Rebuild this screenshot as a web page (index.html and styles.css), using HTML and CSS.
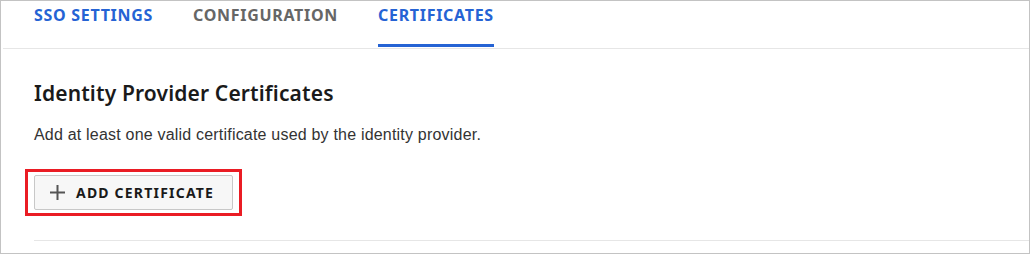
FILE: index.html
```html
<!DOCTYPE html>
<html lang="en">

<head>
    <meta charset="UTF-8">
    <title>Identity Provider Certificates</title>
    <link rel="stylesheet" href="styles.css">
</head>

<body>
    <div class="panel">
        <nav class="tabs">
            <a class="tab" href="#">SSO SETTINGS</a>
            <a class="tab" href="#">CONFIGURATION</a>
            <a class="tab active" href="#">CERTIFICATES</a>
        </nav>

        <section class="content">
            <h2 class="title">Identity Provider Certificates</h2>
            <p class="desc">Add at least one valid certificate used by the identity provider.</p>

            <div class="highlight">
                <button class="btn-add">
                    <svg class="plus" width="15" height="15" viewBox="0 0 15 15">
                        <path d="M7.5 0v15M0 7.5h15" stroke="#555" stroke-width="2" fill="none" />
                    </svg>
                    ADD CERTIFICATE
                </button>
            </div>

            <div class="divider"></div>
        </section>
    </div>
</body>

</html>
```

FILE: styles.css
```css
body {
    margin: 0;
    background: #fff;
}

.panel {
    width: 1030px;
    height: 254px;
    box-sizing: border-box;
    border: 1px solid #c3c3c3;
    overflow: hidden;
}

.tabs {
    display: flex;
    gap: 40px;
    padding-left: 31px;
    padding-bottom: 1px;
    margin-left: 2px;
    border-bottom: 1px solid #e6e6e6;
}

.tab {
    font-family: "Noto Sans", sans-serif;
    font-weight: 700;
    font-size: 16px;
    letter-spacing: 0.7px;
    line-height: 22px;
    padding: 3px 0 18px;
    color: #666;
    text-decoration: none;
    border-bottom: 3px solid transparent;
}

.tab:first-child,
.tab.active {
    color: #2563d4;
}

.tab.active {
    border-bottom-color: #2563d4;
}

.content {
    padding-left: 33px;
}

.title {
    font-family: "Noto Sans", sans-serif;
    font-weight: 600;
    font-size: 21px;
    letter-spacing: 0.15px;
    line-height: 28px;
    color: #1a1a1a;
    margin: 30px 0 0;
}

.desc {
    font-family: "Liberation Sans", Arial, sans-serif;
    font-size: 16px;
    letter-spacing: 0.2px;
    line-height: 20px;
    color: #333;
    margin: 18px 0 0;
}

.highlight {
    display: inline-block;
    margin: 24px 0 0 -9px;
    padding: 3px 6px;
    border: 3px solid #ea1c24;
}

.btn-add {
    display: flex;
    align-items: center;
    gap: 11px;
    width: 199px;
    height: 35px;
    box-sizing: border-box;
    padding: 0 0 0 15px;
    background: #f7f7f7;
    border: 1px solid #c8c8c8;
    border-radius: 2px;
    font-family: "Noto Sans", sans-serif;
    font-weight: 700;
    font-size: 14px;
    letter-spacing: 1.2px;
    color: #1a1a1a;
}

.divider {
    margin-top: 24px;
    border-top: 1px solid #e6e6e6;
}
```
